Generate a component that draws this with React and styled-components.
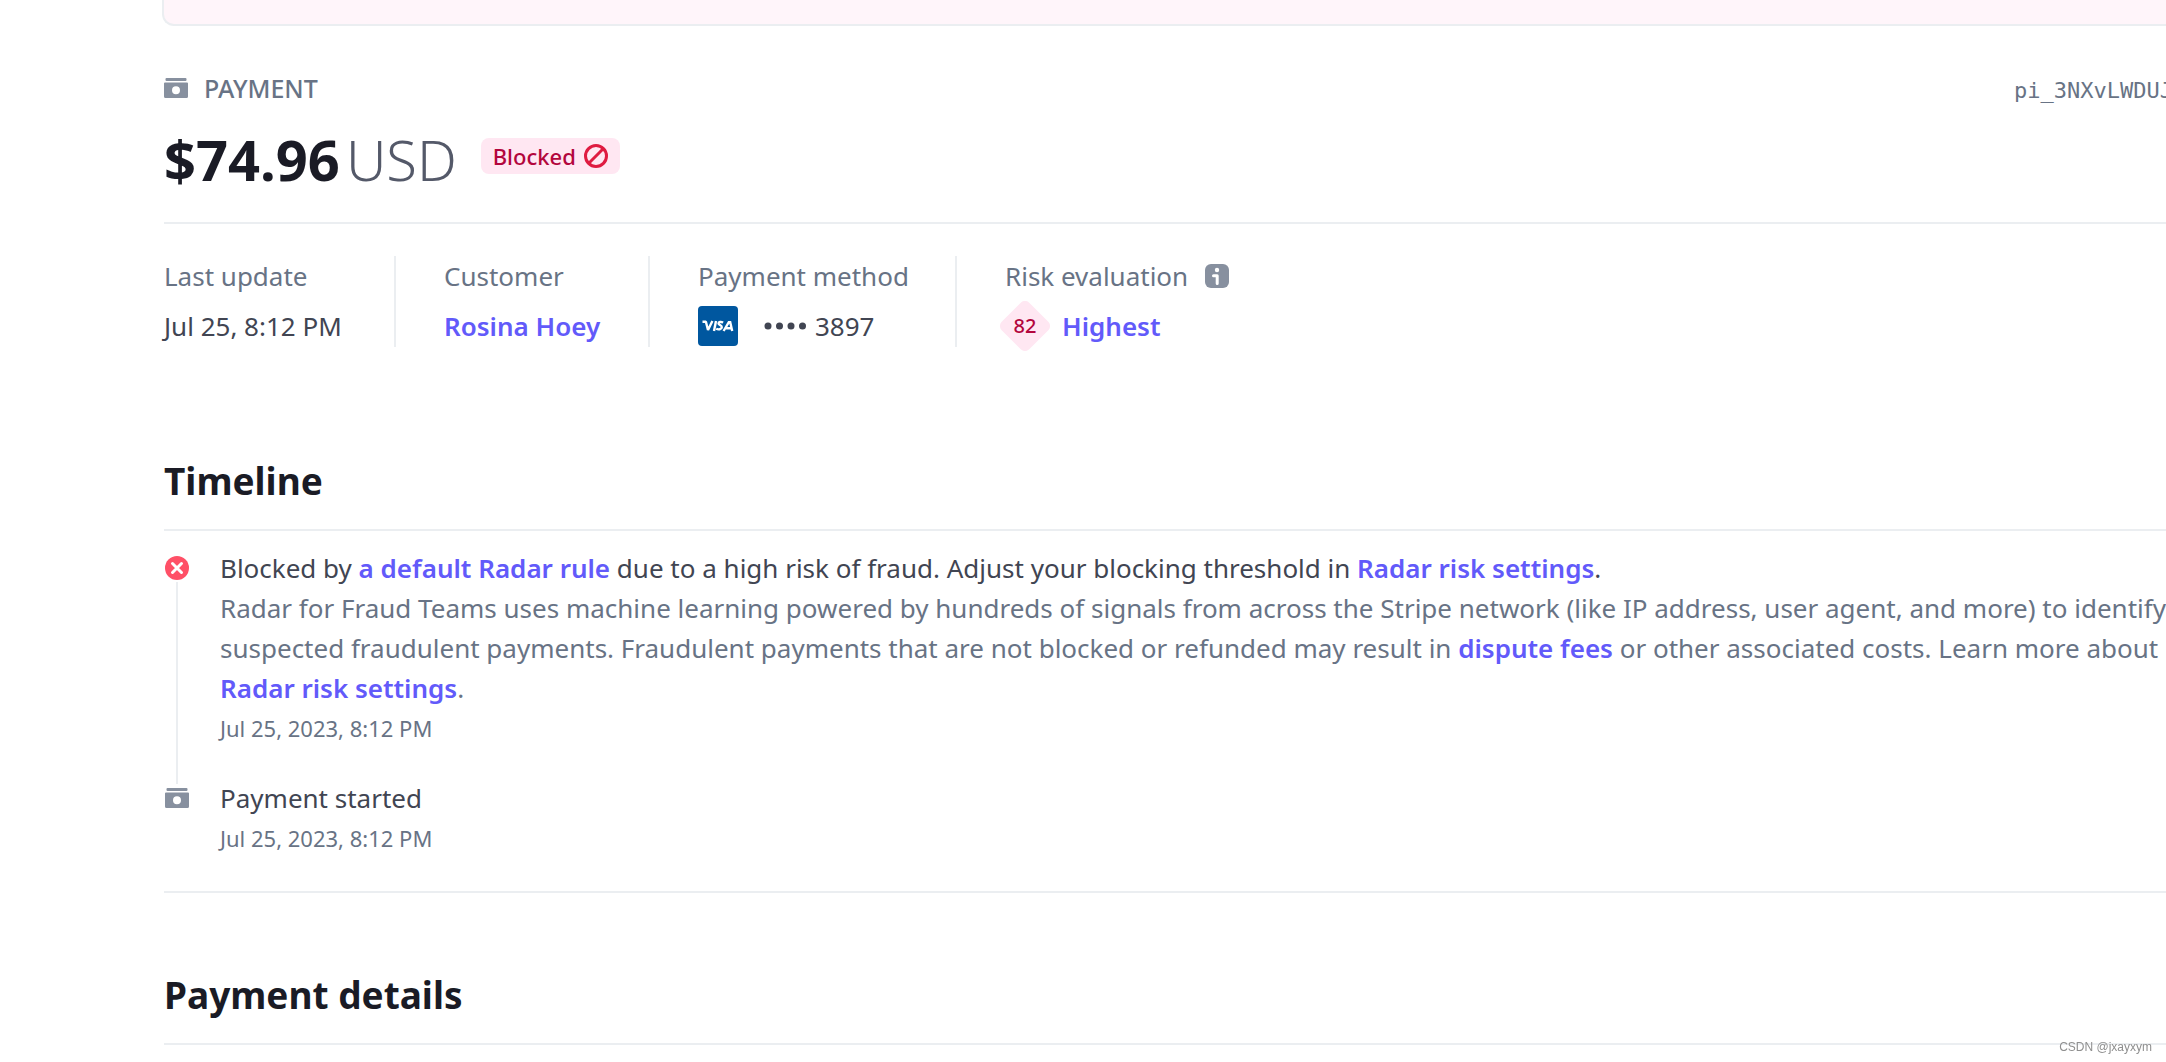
import React from "react"
import styled, { createGlobalStyle } from "styled-components";

const color_text = "#414552";
const color_muted = "#687385";
const color_title = "#1a1b25";
const color_link = "#625afa";
const color_border = "#ebeef1";
const color_icon = "#87909f";
const color_pink = "#ffe7f2";
const color_danger = "#b3063d";

const GlobalStyle = createGlobalStyle`
    *{
        box-sizing: border-box;
    }
    body{
        margin: 0;
        overflow: hidden;
        background-color: #ffffff;
        color: ${color_text};
        font-family: "Noto Sans", "Open Sans", sans-serif;
        font-size: 26px;
        line-height: 40px;
        white-space: nowrap;
    }
    h1, h2, p, dl, dt, dd, ol{
        margin: 0;
        padding: 0;
    }
    svg{
        display: block;
        flex-shrink: 0;
    }
`

const Page = styled.main`
    padding-left: 164px;
`

const Banner = styled.div`
    height: 26px;
    margin-left: -2px;
    border: 2px solid ${color_border};
    border-width: 0 0 2px 2px;
    border-radius: 0 0 0 12px;
    background-color: #fff5fa;
`

const Header = styled.header`
    display: flex;
    flex-direction: column;
    gap: 12px;
    padding: 42px 0 24px;
    border-bottom: 2px solid ${color_border};
`

const HeaderTop = styled.div`
    display: flex;
    justify-content: space-between;
    align-items: baseline;
    height: 40px;
`

const Kind = styled.div`
    display: flex;
    align-items: center;
    gap: 16px;
    color: ${color_muted};
    font-size: 25px;
    font-weight: 500;
`

const PaymentId = styled.code`
    width: 152px;
    color: ${color_muted};
    font-family: "DejaVu Sans Mono", "Liberation Mono", monospace;
    font-size: 22px;
`

const AmountRow = styled.div`
    display: flex;
    align-items: center;
    gap: 24px;
    height: 78px;
`

const Amount = styled.h1`
    display: flex;
    gap: 6px;
    color: ${color_title};
    font-size: 56px;
    font-weight: 700;
    line-height: 78px;

    .currency{
        color: #545969;
        font-weight: 300;
    }
`

const Badge = styled.span`
    display: flex;
    align-items: center;
    gap: 8px;
    height: 36px;
    margin-bottom: 6px;
    padding: 0 12px;
    border-radius: 8px;
    background-color: ${color_pink};
    color: ${color_danger};
    font-size: 22px;
    font-weight: 500;
`

const Facts = styled.dl`
    display: grid;
    grid-template-columns: 232px 254px 307px 1fr;
    padding-top: 32px;
`

const Fact = styled.div`
    height: 91px;
    padding-left: ${({ $first }) => ($first ? "0" : "48px")};
    border-right: ${({ $last }) => ($last ? "0" : `2px solid ${color_border}`)};

    dt{
        display: flex;
        align-items: center;
        gap: 17px;
        color: ${color_muted};
    }
    dd{
        display: flex;
        align-items: center;
        height: 59px;
    }
`

const Link = styled.a`
    color: ${color_link};
    font-weight: 600;
    text-decoration: none;
`

const CardNumber = styled.span`
    display: flex;
    align-items: center;
    gap: 8px;
    margin-left: 26px;
`

const RiskScore = styled.span`
    display: grid;
    place-items: center;
    width: 50px;
    height: 50px;
    margin: 0 12px 0 -5px;
    color: ${color_danger};
    font-size: 20px;
    font-weight: 500;

    svg, span{
        grid-area: 1 / 1;
    }
`

const Section = styled.section`
    padding-top: ${({ $space }) => $space};
`

const SectionTitle = styled.h2`
    padding-bottom: 20px;
    border-bottom: 2px solid ${color_border};
    color: ${color_title};
    font-size: 37px;
    font-weight: 700;
    line-height: 56px;
`

const Events = styled.ol`
    padding: 17px 0 33px;
    border-bottom: 2px solid ${color_border};
    list-style: none;
`

const Event = styled.li`
    display: flex;
    gap: 31px;
    padding-left: 1px;
`

const Rail = styled.div`
    display: flex;
    flex-direction: column;
    align-items: center;
    width: 24px;

    .marker{
        display: flex;
        align-items: center;
        height: 40px;
    }
    .line{
        flex: 1;
        width: 2px;
        margin: -6px 0 -6px;
        background-color: ${color_border};
    }
`

const EventBody = styled.div`
    padding-bottom: ${({ $last }) => ($last ? "0" : "30px")};
`

const Detail = styled.p`
    color: ${color_muted};
`

const Time = styled.time`
    display: block;
    color: ${color_muted};
    font-size: 22px;
`

const Watermark = styled.small`
    position: fixed;
    right: 14px;
    bottom: 7px;
    color: #8f8f8f;
    font-family: "Liberation Sans", Arial, sans-serif;
    font-size: 12px;
    line-height: 16px;
`

const MoneyIcon = () => (
    <svg width="24" height="20" viewBox="0 2 24 20" fill={color_icon}>
        <rect x="1.5" y="2" width="21" height="3" rx="1" />
        <path fillRule="evenodd" d="M1 6.5h22a1 1 0 0 1 1 1V20.500a1.500 1.500 0 0 1-1.500 1.500h-21A1.500 1.500 0 0 1 0 20.500V7.500a1 1 0 0 1 1-1zM12 10.200a4 4 0 1 0 0 8a4 4 0 1 0 0-8z" />
    </svg>
)

const BlockedIcon = () => (
    <svg width="24" height="24" viewBox="0 0 24 24" fill="none" stroke="#df1b41" strokeWidth="3">
        <circle cx="12" cy="12" r="10.500" />
        <path d="M4.800 19.200L19.200 4.800" />
    </svg>
)

const InfoIcon = () => (
    <svg width="24" height="24" viewBox="0 0 24 24">
        <rect width="24" height="24" rx="6" fill={color_icon} />
        <circle cx="12" cy="6" r="2.200" fill="#ffffff" />
        <path d="M8.500 11.800h3.700v7.700" fill="none" stroke="#ffffff" strokeWidth="3" strokeLinecap="round" strokeLinejoin="round" />
    </svg>
)

const ErrorIcon = () => (
    <svg width="24" height="24" viewBox="0 0 24 24">
        <circle cx="12" cy="12" r="12" fill="#ff5067" />
        <path d="M7.500 7.500l9 9M16.500 7.500l-9 9" stroke="#ffffff" strokeWidth="3" strokeLinecap="round" />
    </svg>
)

const VisaIcon = () => (
    <svg width="40" height="40" viewBox="0 0 40 40" role="img" aria-label="Visa">
        <rect width="40" height="40" rx="4" fill="#00579f" />
        <g fill="none" stroke="#ffffff" strokeWidth="2.400">
            <path d="M4.500 15.800h3.400l2.100 8.200l4.400-9" strokeLinejoin="bevel" />
            <path d="M18 15l-2 10" />
            <path d="M25.200 16.500c-2.200-.9-4.600-.6-4.700.8c-.1 1.700 3.400 1.700 3.300 3.800c-.1 2.300-3.500 2.800-5.600 1.700" />
            <path d="M25.600 25l5.200-8.900h1.400l2 8.900M28 22.300h5.500" />
        </g>
    </svg>
)

const DotsIcon = () => (
    <svg width="43" height="8" viewBox="0 0 43 8" fill={color_text}>
        <circle cx="4" cy="4" r="3.500" />
        <circle cx="15.500" cy="4" r="3.500" />
        <circle cx="27" cy="4" r="3.500" />
        <circle cx="38.500" cy="4" r="3.500" />
    </svg>
)

const DiamondIcon = () => (
    <svg width="50" height="50" viewBox="0 0 50 50">
        <rect x="5.500" y="5.500" width="39" height="39" rx="6" fill={color_pink} transform="rotate(45 25 25)" />
    </svg>
)

const App = () => {
    return (
        <Page>
            <GlobalStyle />
            <Banner />
            <Header>
                <HeaderTop>
                    <Kind><MoneyIcon />PAYMENT</Kind>
                    <PaymentId>pi_3NXvLWDUJ</PaymentId>
                </HeaderTop>
                <AmountRow>
                    <Amount>
                        <span>$74.96</span>
                        <span className="currency">USD</span>
                    </Amount>
                    <Badge>Blocked<BlockedIcon /></Badge>
                </AmountRow>
            </Header>

            <Facts>
                <Fact $first>
                    <dt>Last update</dt>
                    <dd>Jul 25, 8:12 PM</dd>
                </Fact>
                <Fact>
                    <dt>Customer</dt>
                    <dd><Link href="#customer">Rosina Hoey</Link></dd>
                </Fact>
                <Fact>
                    <dt>Payment method</dt>
                    <dd>
                        <VisaIcon />
                        <CardNumber><DotsIcon />3897</CardNumber>
                    </dd>
                </Fact>
                <Fact $last>
                    <dt>Risk evaluation<InfoIcon /></dt>
                    <dd>
                        <RiskScore><DiamondIcon /><span>82</span></RiskScore>
                        <Link href="#risk">Highest</Link>
                    </dd>
                </Fact>
            </Facts>

            <Section $space="106px">
                <SectionTitle>Timeline</SectionTitle>
                <Events>
                    <Event>
                        <Rail>
                            <div className="marker"><ErrorIcon /></div>
                            <div className="line" />
                        </Rail>
                        <EventBody>
                            <p>
                                Blocked by <Link href="#rule">a default Radar rule</Link> due to a high risk of fraud. Adjust your blocking threshold in <Link href="#settings">Radar risk settings</Link>.
                            </p>
                            <Detail>
                                Radar for Fraud Teams uses machine learning powered by hundreds of signals from across the Stripe network (like IP address, user agent, and more) to identify<br />
                                suspected fraudulent payments. Fraudulent payments that are not blocked or refunded may result in <Link href="#fees">dispute fees</Link> or other associated costs. Learn more about<br />
                                <Link href="#settings">Radar risk settings</Link>.
                            </Detail>
                            <Time>Jul 25, 2023, 8:12 PM</Time>
                        </EventBody>
                    </Event>
                    <Event>
                        <Rail>
                            <div className="marker"><MoneyIcon /></div>
                        </Rail>
                        <EventBody $last>
                            <p>Payment started</p>
                            <Time>Jul 25, 2023, 8:12 PM</Time>
                        </EventBody>
                    </Event>
                </Events>
            </Section>

            <Section $space="74px">
                <SectionTitle>Payment details</SectionTitle>
            </Section>
            <Watermark>CSDN @jxayxym</Watermark>
        </Page>
    )
}

export default App;
